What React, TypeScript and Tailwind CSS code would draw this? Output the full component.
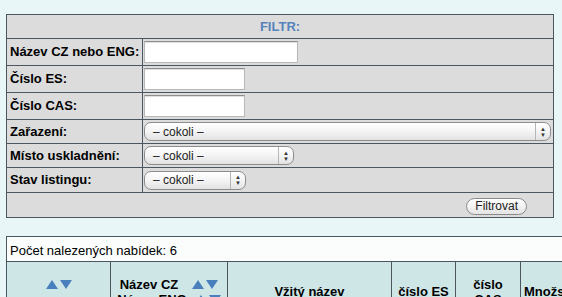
import React from 'react';

const Arrows = ({ className = '' }: { className?: string }) => (
  <svg width="26" height="10" viewBox="0 0 26 10" className={className}>
    <polygon points="0,10 6,1 12,10" fill="#4a7fbe" />
    <polygon points="14,1 26,1 20,10" fill="#4a7fbe" />
  </svg>
);

const FakeSelect = ({ width }: { width: string }) => (
  <div
    className={`${width} h-[19px] flex items-center justify-between rounded-[7px] border border-[#8d8d8d] bg-gradient-to-b from-white via-[#f4f4f4] to-[#e2e2e2] shadow-[inset_0_1px_0_#fff]`}
  >
    <span className="pl-[8px] text-[12px] leading-none text-[#222]">– cokoli –</span>
    <span className="flex h-full w-[15px] flex-col items-center justify-center border-l border-[#b5b5b5] text-[6px] leading-[6px] text-[#333]">
      <span>▲</span>
      <span>▼</span>
    </span>
  </div>
);

const TextBox = ({ width }: { width: string }) => (
  <div className={`${width} h-[22px] border border-[#b8b8b8] border-t-[#8e8e8e] bg-white shadow-[inset_0_1px_1px_#ddd]`} />
);

const labelCell = 'border border-[#4b5661] bg-[#dcdcdc] pl-[3px] pr-[2px] text-left align-middle text-[13px] font-bold text-black whitespace-nowrap';
const valueCell = 'border border-[#4b5661] bg-[#dcdcdc] pl-[1px] align-middle';

export default function App() {
  return (
    <div className="min-h-[297px] w-full overflow-hidden bg-[#e8f6f7] pl-[6px] pt-[14px] font-['Liberation_Sans',Arial,sans-serif]">
      <table className="w-[548px] border-collapse">
        <tbody>
          <tr className="h-[24px]">
            <td colSpan={2} className="border border-[#4b5661] bg-[#dcdcdc] text-center align-middle text-[13px] font-bold text-[#5583bc]">
              FILTR:
            </td>
          </tr>
          <tr className="h-[27px]">
            <td className={`${labelCell} w-[136px]`}>Název CZ nebo ENG:</td>
            <td className={valueCell}><TextBox width="w-[154px]" /></td>
          </tr>
          <tr className="h-[27px]">
            <td className={labelCell}>Číslo ES:</td>
            <td className={valueCell}><TextBox width="w-[101px]" /></td>
          </tr>
          <tr className="h-[27px]">
            <td className={labelCell}>Číslo CAS:</td>
            <td className={valueCell}><TextBox width="w-[101px]" /></td>
          </tr>
          <tr className="h-[24px]">
            <td className={labelCell}>Zařazení:</td>
            <td className={valueCell}><FakeSelect width="w-[407px]" /></td>
          </tr>
          <tr className="h-[24px]">
            <td className={labelCell}>Místo uskladnění:</td>
            <td className={valueCell}><FakeSelect width="w-[150px]" /></td>
          </tr>
          <tr className="h-[25px]">
            <td className={labelCell}>Stav listingu:</td>
            <td className={valueCell}><FakeSelect width="w-[102px]" /></td>
          </tr>
          <tr className="h-[24px]">
            <td colSpan={2} className="border border-[#4b5661] bg-[#dcdcdc] pr-[26px] text-right align-middle">
              <button className="inline-flex h-[17px] items-center rounded-full border border-[#8a8a8a] bg-gradient-to-b from-white to-[#e4e4e4] px-[8px] text-[12px] leading-none text-[#222]">
                Filtrovat
              </button>
            </td>
          </tr>
        </tbody>
      </table>

      <table className="mt-[18px] w-[620px] border-collapse text-[13px]">
        <tbody>
          <tr className="h-[25px]">
            <td colSpan={6} className="border border-[#4b5661] bg-[#fbfdfd] pl-[3px] pt-[3px] align-middle text-black">
              Počet nalezených nabídek: 6
            </td>
          </tr>
          <tr className="h-[60px] bg-[#cfe6e7] text-center font-bold text-black">
            <td className="w-[104px] border border-[#4b5661] align-middle">
              <div className="flex justify-center pb-[16px]"><Arrows /></div>
            </td>
            <td className="w-[117px] border border-[#4b5661] align-middle leading-[15px]">
              <div className="flex items-center justify-center gap-[14px]">Název CZ <Arrows /></div>
              <div className="flex items-center justify-center gap-[8px]">Název ENG <Arrows /></div>
            </td>
            <td className="w-[164px] border border-[#4b5661] align-middle">Vžitý název</td>
            <td className="w-[64px] border border-[#4b5661] align-middle">číslo ES</td>
            <td className="w-[65px] border border-[#4b5661] align-middle leading-[15px]">
              <div>číslo</div>
              <div>CAS</div>
            </td>
            <td className="border border-[#4b5661] pl-[3px] text-left align-middle">Množství</td>
          </tr>
        </tbody>
      </table>
    </div>
  );
}
